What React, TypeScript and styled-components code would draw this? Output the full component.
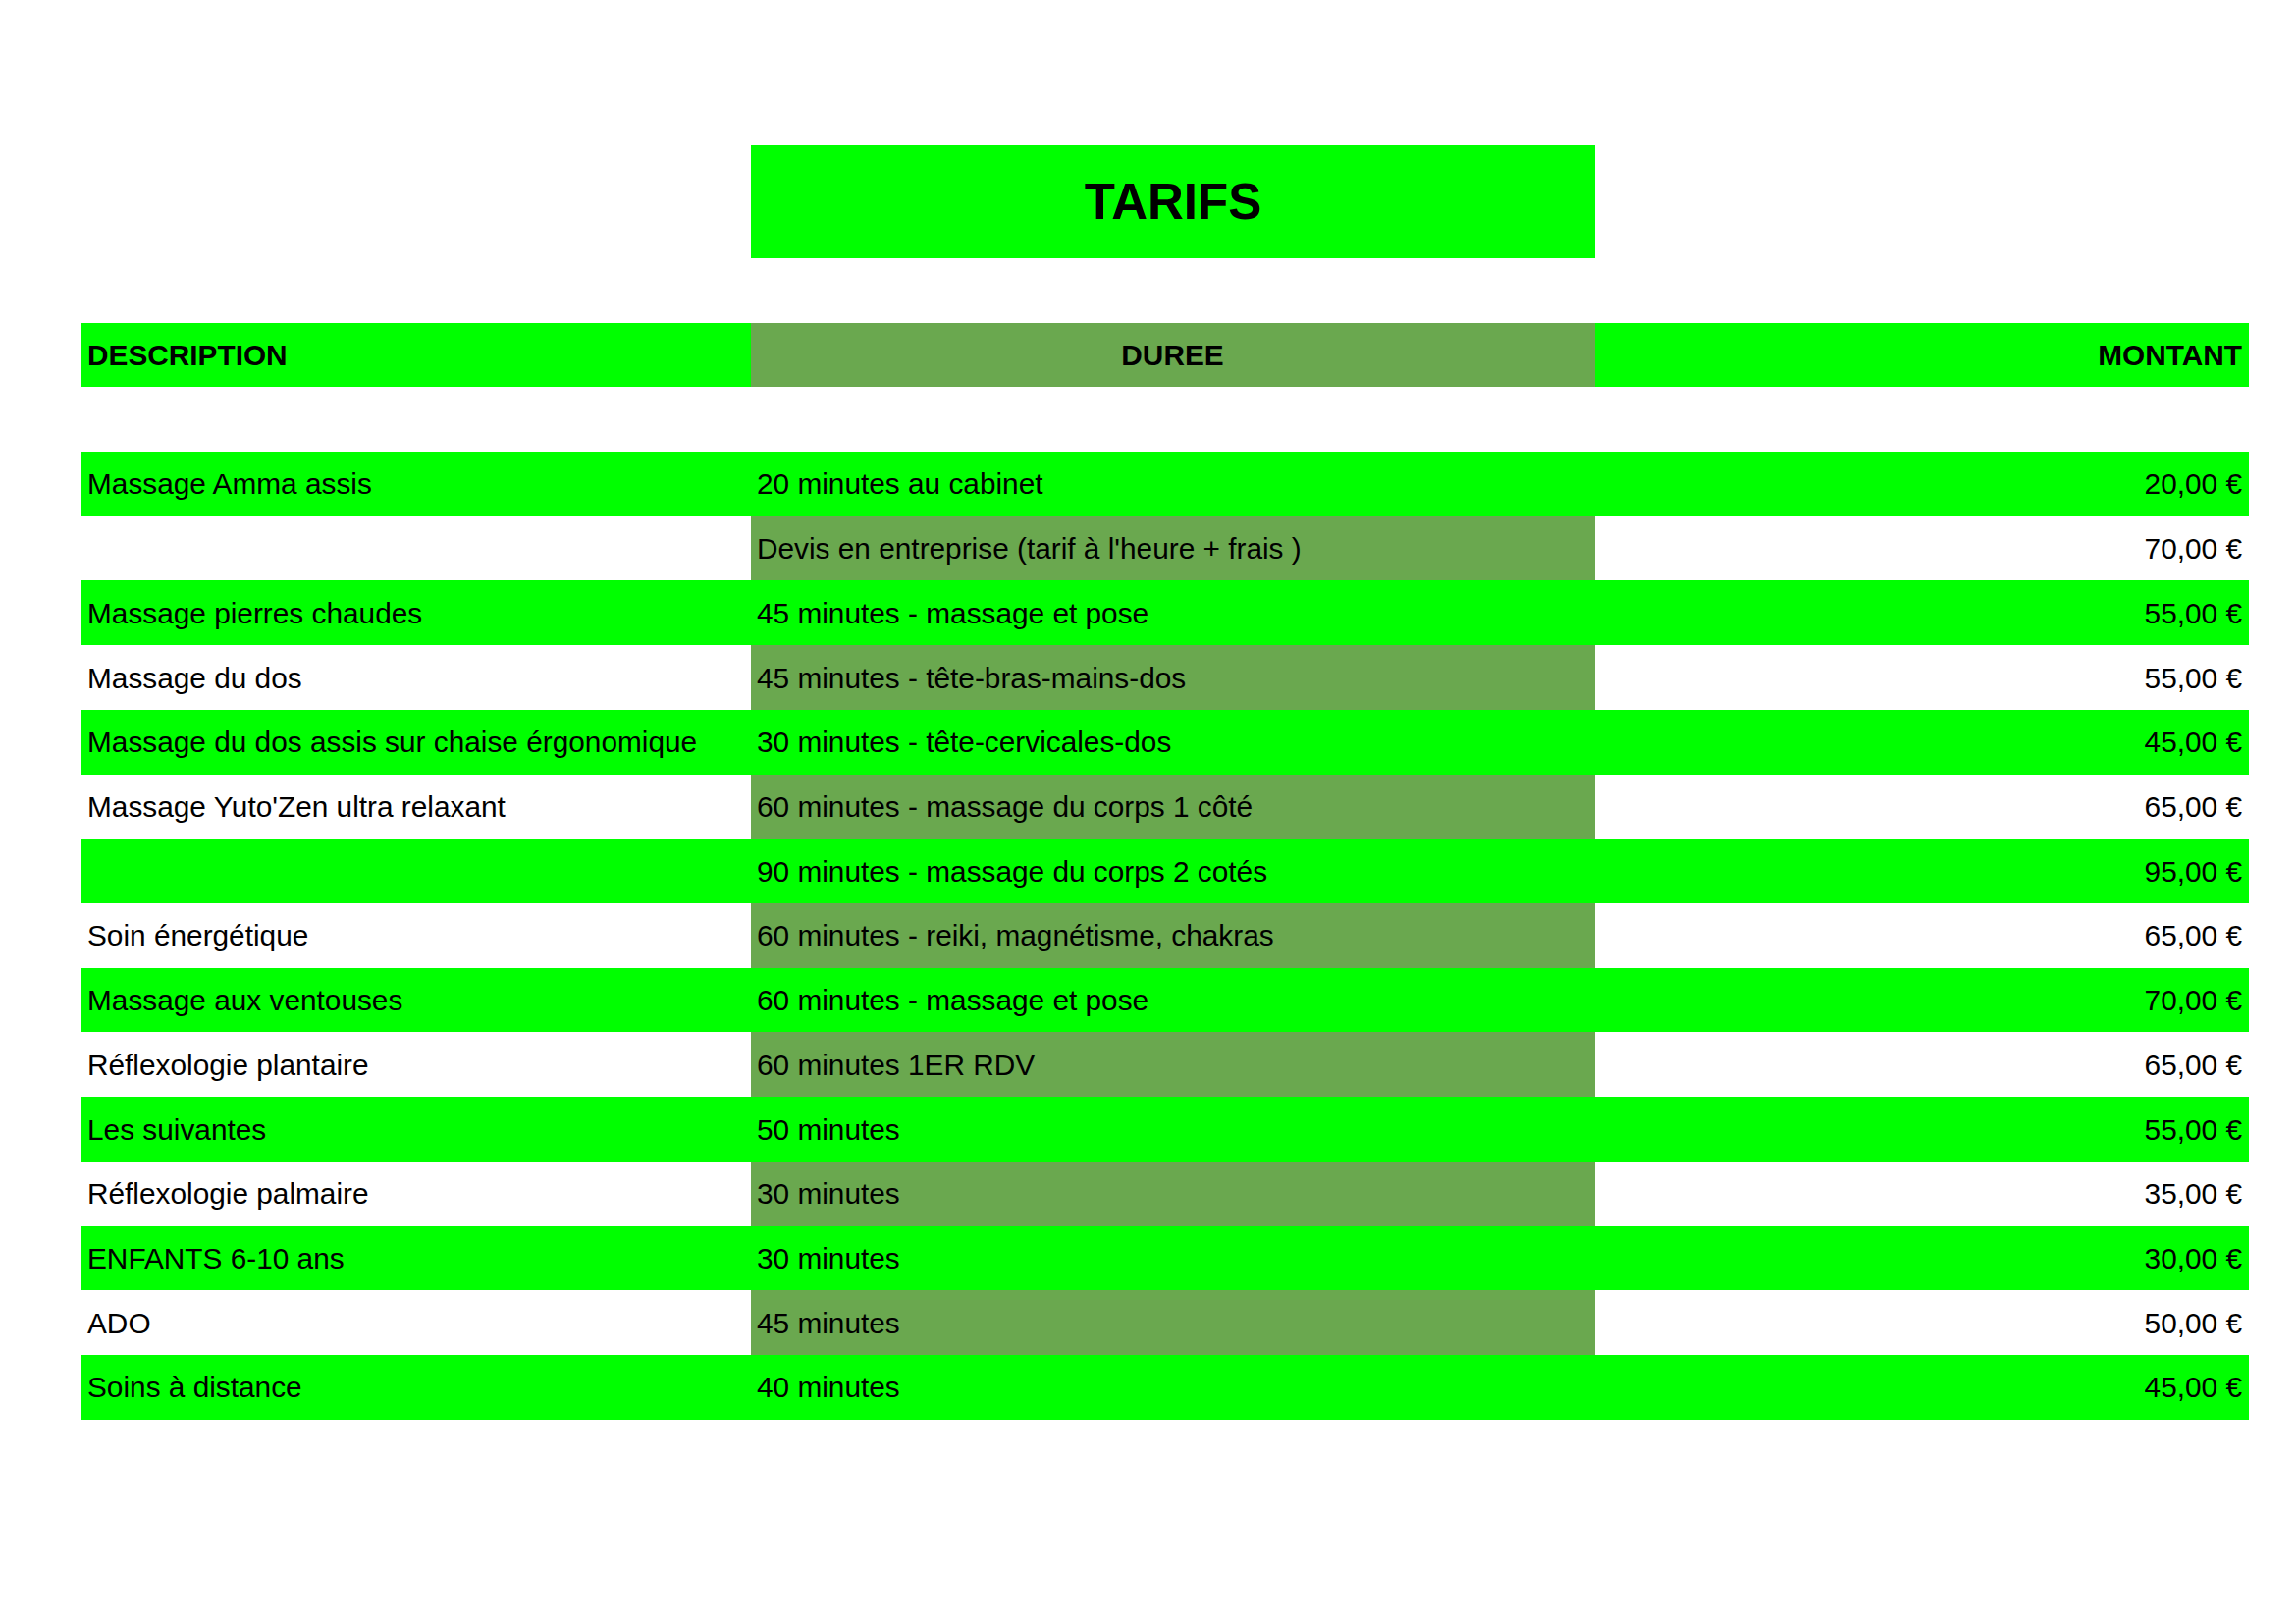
import React from 'react';
import styled, { createGlobalStyle } from 'styled-components';

const GREEN = '#00ff00';
const OLIVE = '#6aa84f';

const GlobalStyle = createGlobalStyle`
  html, body {
    margin: 0;
    padding: 0;
    background: #ffffff;
  }
  body {
    font-family: 'Liberation Sans', Arial, sans-serif;
    color: #000000;
  }
`;

const Page = styled.div`
  width: 2339px;
  height: 1653px;
  box-sizing: border-box;
  padding: 148px 0 0 83px;
  background: #ffffff;
`;

const Sheet = styled.div`
  display: grid;
  grid-template-columns: 682px 860px 666px;
  width: 2208px;
`;

const TitleBox = styled.div`
  grid-column: 2;
  height: 115px;
  margin-bottom: 66px;
  background: ${GREEN};
  display: flex;
  align-items: center;
  justify-content: center;
  font-size: 51px;
  font-weight: 700;
`;

const Spacer = styled.div`
  grid-column: 1 / span 3;
  height: 66px;
`;

type Align = 'left' | 'center' | 'right';

const Cell = styled.div<{
  $bg: string;
  $align?: Align;
  $bold?: boolean;
  $h: number;
  $start?: boolean;
}>`
  ${p => (p.$start ? 'grid-column-start: 1;' : '')}
  height: ${p => p.$h}px;
  box-sizing: border-box;
  background: ${p => p.$bg};
  display: flex;
  align-items: center;
  justify-content: ${p =>
    p.$align === 'right' ? 'flex-end' : p.$align === 'center' ? 'center' : 'flex-start'};
  padding: 1px 7px 0 6px;
  font-size: 29.8px;
  font-weight: ${p => (p.$bold ? 700 : 400)};
  white-space: nowrap;
  overflow: hidden;
`;

const rows = [
  ['Massage Amma assis', '20 minutes au cabinet', '20,00 €'],
  ['', "Devis en entreprise (tarif à l'heure + frais )", '70,00 €'],
  ['Massage pierres chaudes', '45 minutes - massage et pose', '55,00 €'],
  ['Massage du dos', '45 minutes - tête-bras-mains-dos', '55,00 €'],
  ['Massage du dos assis sur chaise érgonomique', '30 minutes - tête-cervicales-dos', '45,00 €'],
  ["Massage Yuto'Zen ultra relaxant", '60 minutes - massage du corps 1 côté', '65,00 €'],
  ['', '90 minutes - massage du corps 2 cotés', '95,00 €'],
  ['Soin énergétique', '60 minutes - reiki, magnétisme, chakras', '65,00 €'],
  ['Massage aux ventouses', '60 minutes - massage et pose', '70,00 €'],
  ['Réflexologie plantaire', '60 minutes 1ER RDV', '65,00 €'],
  ['Les suivantes', '50 minutes', '55,00 €'],
  ['Réflexologie palmaire', '30 minutes', '35,00 €'],
  ['ENFANTS 6-10 ans', '30 minutes', '30,00 €'],
  ['ADO', '45 minutes', '50,00 €'],
  ['Soins à distance', '40 minutes', '45,00 €'],
];

const ROW_H = 65.73;

const App: React.FC = () => {
  return (
    <Page>
      <GlobalStyle />
      <Sheet>
        <TitleBox>TARIFS</TitleBox>
        <Cell $bg={GREEN} $bold $h={65} $start>DESCRIPTION</Cell>
        <Cell $bg={OLIVE} $bold $align="center" $h={65}>DUREE</Cell>
        <Cell $bg={GREEN} $bold $align="right" $h={65}>MONTANT</Cell>
        <Spacer />
        {rows.map(([desc, duree, montant], i) => {
          const full = i % 2 === 0;
          return (
            <React.Fragment key={i}>
              <Cell $bg={full ? GREEN : '#ffffff'} $h={ROW_H}>{desc}</Cell>
              <Cell $bg={full ? GREEN : OLIVE} $h={ROW_H}>{duree}</Cell>
              <Cell $bg={full ? GREEN : '#ffffff'} $align="right" $h={ROW_H}>{montant}</Cell>
            </React.Fragment>
          );
        })}
      </Sheet>
    </Page>
  );
};

export default App;
